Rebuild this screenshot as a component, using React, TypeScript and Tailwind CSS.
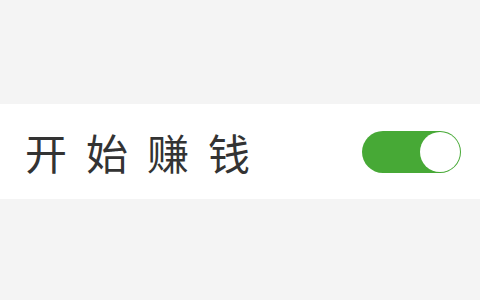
import React from "react";

const App = () => {
  return (
    <div className="w-[480px] h-[300px] bg-[#f4f4f4] pt-[104px]">
      <div className="h-[95px] bg-white flex items-center justify-between pl-[25px] pr-[19px]">
        <span
          className="text-[42px] leading-none tracking-[19px] text-[#333333]"
          style={{ fontFamily: '"Noto Sans CJK SC", sans-serif' }}
        >
          开始赚钱
        </span>
        <div className="w-[99px] h-[42px] rounded-full bg-[#47a936] flex items-center justify-end pr-px">
          <div className="w-[40px] h-[40px] rounded-full bg-white" />
        </div>
      </div>
    </div>
  );
};

export default App;
